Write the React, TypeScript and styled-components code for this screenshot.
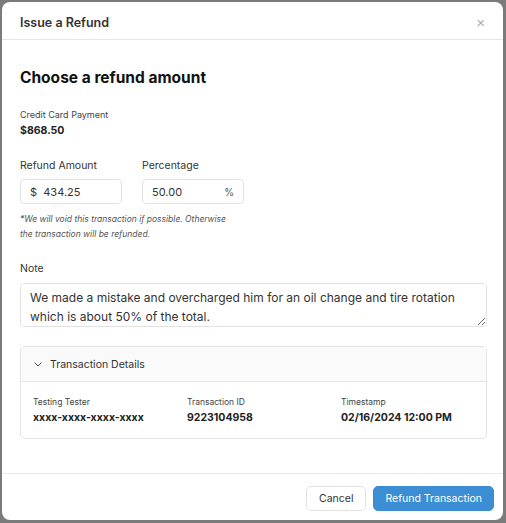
import React from 'react';
import styled, { createGlobalStyle } from 'styled-components';

const GlobalStyle = createGlobalStyle`
  html, body {
    margin: 0;
    padding: 0;
    background: #7b7b7b;
    font-family: Inter, "Noto Sans", sans-serif;
    color: #222;
  }
  * { box-sizing: border-box; }
`;

const Page = styled.div`
  padding: 2px 3px 3px 2px;
  height: 523px;
`;

const Modal = styled.div`
  background: #fff;
  border-radius: 8px;
  height: 100%;
  display: flex;
  flex-direction: column;
  overflow: hidden;
`;

const Header = styled.div`
  height: 38px;
  display: flex;
  align-items: center;
  justify-content: space-between;
  padding: 3px 18px 0;
  border-bottom: 1px solid #e6e6e6;
`;

const HeaderTitle = styled.div`
  font-size: 12.5px;
  font-weight: 600;
  color: #333;
`;

const Close = styled.button`
  border: none;
  background: none;
  color: #aaa;
  font-size: 15px;
  padding: 0;
  cursor: pointer;
  line-height: 1;
`;

const Body = styled.div`
  flex: 1;
  padding: 28px 16px 0 18px;
`;

const Heading = styled.h2`
  margin: 0 0 22px;
  font-size: 15.5px;
  font-weight: 700;
  color: #111;
`;

const SmallLabel = styled.div`
  font-size: 9px;
  color: #444;
`;

const Total = styled.div`
  margin-top: 4px;
  font-size: 10.5px;
  font-weight: 700;
  color: #222;
`;

const Row = styled.div`
  display: flex;
  gap: 20px;
  margin-top: 22px;
`;

const Field = styled.div`
  display: flex;
  flex-direction: column;
  width: 102px;
`;

const Label = styled.div`
  font-size: 10.5px;
  color: #333;
  margin-bottom: 7px;
`;

const InputBox = styled.div`
  height: 25px;
  border: 1px solid #e2e2e2;
  border-radius: 4px;
  display: flex;
  align-items: center;
  justify-content: space-between;
  padding: 0 9px;
  font-size: 11px;
  color: #333;
`;

const Suffix = styled.span`
  font-size: 10px;
  color: #555;
`;

const Hint = styled.p`
  margin: 8px 0 0;
  font-size: 8.5px;
  font-style: italic;
  line-height: 15px;
  color: #555;
  width: 218px;
`;

const NoteLabel = styled(Label)`
  margin-top: 20px;
  margin-bottom: 8px;
`;

const TextArea = styled.textarea`
  display: block;
  width: 100%;
  height: 44px;
  border: 1px solid #e2e2e2;
  border-radius: 4px;
  padding: 4px 9px;
  font-family: inherit;
  font-size: 12px;
  line-height: 19px;
  color: #333;
  resize: vertical;
  outline: none;
`;

const Details = styled.div`
  margin-top: 19px;
  border: 1px solid #e4e4e4;
  border-radius: 5px;
  overflow: hidden;
`;

const DetailsHeader = styled.div`
  height: 35px;
  background: #fafafa;
  border-bottom: 1px solid #e6e6e6;
  display: flex;
  align-items: center;
  gap: 7px;
  padding: 0 12px;
  font-size: 10.5px;
  color: #333;
`;

const DetailsGrid = styled.div`
  display: grid;
  grid-template-columns: 154px 154px 1fr;
  padding: 15px 12px 14px;
`;

const Cell = styled.div`
  display: flex;
  flex-direction: column;
  gap: 4px;
`;

const CellLabel = styled.div`
  font-size: 8.5px;
  color: #444;
`;

const CellValue = styled.div`
  font-size: 10.5px;
  font-weight: 700;
  color: #222;
`;

const Footer = styled.div`
  border-top: 1px solid #e8e8e8;
  height: 46px;
  display: flex;
  align-items: center;
  justify-content: flex-end;
  gap: 7px;
  padding: 4px 9px 0 0;
  margin-bottom: 1px;
`;

const Button = styled.button<{ $primary?: boolean }>`
  height: 25px;
  padding: 0 ${p => (p.$primary ? '11px' : '12px')};
  border-radius: 5px;
  font-family: inherit;
  font-size: 10.5px;
  cursor: pointer;
  border: 1px solid ${p => (p.$primary ? '#3a8bd0' : '#e2e2e2')};
  background: ${p => (p.$primary ? '#3b8ed3' : '#fff')};
  color: ${p => (p.$primary ? '#fff' : '#333')};
`;

const Chevron = () => (
  <svg width="10" height="10" viewBox="0 0 10 10" fill="none">
    <path d="M1.5 3.5 L5 7 L8.5 3.5" stroke="#555" strokeWidth="1" />
  </svg>
);

export default function App() {
  return (
    <>
      <GlobalStyle />
      <Page>
        <Modal>
          <Header>
            <HeaderTitle>Issue a Refund</HeaderTitle>
            <Close aria-label="Close">×</Close>
          </Header>
          <Body>
            <Heading>Choose a refund amount</Heading>
            <SmallLabel>Credit Card Payment</SmallLabel>
            <Total>$868.50</Total>
            <Row>
              <Field>
                <Label>Refund Amount</Label>
                <InputBox>
                  <span>$&nbsp;&nbsp;434.25</span>
                </InputBox>
              </Field>
              <Field>
                <Label>Percentage</Label>
                <InputBox>
                  <span>50.00</span>
                  <Suffix>%</Suffix>
                </InputBox>
              </Field>
            </Row>
            <Hint>
              *We will void this transaction if possible. Otherwise the transaction will be refunded.
            </Hint>
            <NoteLabel>Note</NoteLabel>
            <TextArea
              defaultValue="We made a mistake and overcharged him for an oil change and tire rotation which is about 50% of the total."
            />
            <Details>
              <DetailsHeader>
                <Chevron />
                Transaction Details
              </DetailsHeader>
              <DetailsGrid>
                <Cell>
                  <CellLabel>Testing Tester</CellLabel>
                  <CellValue>xxxx-xxxx-xxxx-xxxx</CellValue>
                </Cell>
                <Cell>
                  <CellLabel>Transaction ID</CellLabel>
                  <CellValue>9223104958</CellValue>
                </Cell>
                <Cell>
                  <CellLabel>Timestamp</CellLabel>
                  <CellValue>02/16/2024 12:00 PM</CellValue>
                </Cell>
              </DetailsGrid>
            </Details>
          </Body>
          <Footer>
            <Button>Cancel</Button>
            <Button $primary>Refund Transaction</Button>
          </Footer>
        </Modal>
      </Page>
    </>
  );
}
